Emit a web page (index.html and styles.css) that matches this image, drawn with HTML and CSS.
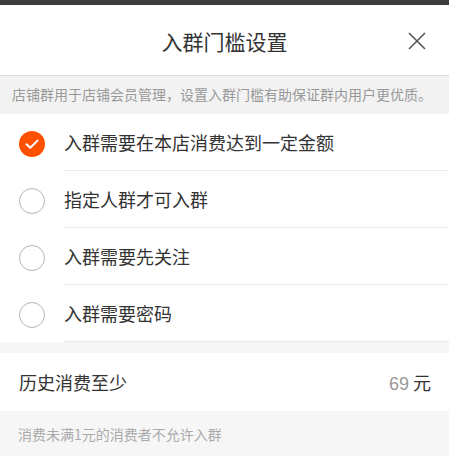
FILE: index.html
```html
<!DOCTYPE html>
<html lang="zh-CN">
<head>
<meta charset="utf-8">
<link rel="stylesheet" href="styles.css">
</head>
<body>
<div class="topbar"></div>
<div class="header">
  <div class="side"></div>
  <div class="title">入群门槛设置</div>
  <div class="side side-right">
    <svg class="close" width="18" height="18" viewBox="0 0 18 18"><path d="M1 1L17 17M17 1L1 17" stroke="#555" stroke-width="1.6" fill="none"/></svg>
  </div>
</div>
<div class="notice">店铺群用于店铺会员管理，设置入群门槛有助保证群内用户更优质。</div>
<div class="options">
  <div class="option">
    <div class="radio-cell"><span class="radio checked"><svg width="26" height="26" viewBox="0 0 26 26"><path d="M7.5 13.2L11.3 16.8L18.5 9.6" stroke="#fff" stroke-width="2" fill="none" stroke-linecap="round" stroke-linejoin="round"/></svg></span></div>
    <div class="label">入群需要在本店消费达到一定金额</div>
  </div>
  <div class="option">
    <div class="radio-cell"><span class="radio"></span></div>
    <div class="label">指定人群才可入群</div>
  </div>
  <div class="option">
    <div class="radio-cell"><span class="radio"></span></div>
    <div class="label">入群需要先关注</div>
  </div>
  <div class="option">
    <div class="radio-cell"><span class="radio"></span></div>
    <div class="label">入群需要密码</div>
  </div>
</div>
<div class="gap"></div>
<div class="amount">
  <span class="amount-label">历史消费至少</span>
  <span class="amount-value"><span class="num">69</span> 元</span>
</div>
<div class="footer">消费未满1元的消费者不允许入群</div>
</body>
</html>
```
FILE: styles.css
```css
* { box-sizing: border-box; }
html, body {
  margin: 0;
  padding: 0;
  background: #f5f5f5;
  font-family: "Noto Sans CJK SC", "Liberation Sans", sans-serif;
  color: #333;
}
.topbar {
  height: 5px;
  background: #3c3c3c;
}
.header {
  height: 71px;
  background: #fff;
  border-bottom: 1px solid #dcdcdc;
  display: grid;
  grid-template-columns: 1fr auto 1fr;
  align-items: center;
}
.title {
  font-size: 21px;
  color: #333;
  line-height: 1;
  padding-top: 2px;
}
.side-right {
  display: flex;
  justify-content: flex-end;
  padding-right: 23px;
  padding-top: 2px;
}
.close { display: block; }
.notice {
  height: 38px;
  background: #f2f2f2;
  font-size: 14px;
  color: #999;
  padding-left: 12px;
  padding-bottom: 2px;
  display: flex;
  align-items: center;
  white-space: nowrap;
}
.options {
  background: #fff;
}
.option {
  display: flex;
  height: 57px;
}
.radio-cell {
  width: 64px;
  display: flex;
  align-items: center;
  padding-left: 19px;
  padding-top: 3px;
}
.radio {
  width: 26px;
  height: 26px;
  border-radius: 50%;
  border: 1px solid #b5b5b5;
  display: block;
}
.radio.checked {
  background: #ff5000;
  border: none;
}
.radio svg { display: block; }
.label {
  flex: 1;
  display: flex;
  align-items: center;
  font-size: 18px;
  color: #333;
  border-bottom: 1px solid #ebebeb;
}
.gap {
  height: 11px;
  background: #f6f6f6;
}
.amount {
  height: 58px;
  background: #fff;
  display: flex;
  align-items: center;
  justify-content: space-between;
  padding: 0 18px 0 19px;
  font-size: 18px;
  color: #333;
}
.num {
  color: #999;
  font-family: "Liberation Sans", sans-serif;
}
.footer {
  height: 45px;
  background: #f6f6f6;
  font-size: 14px;
  color: #aaa;
  padding-left: 18px;
  display: flex;
  align-items: center;
}
```
